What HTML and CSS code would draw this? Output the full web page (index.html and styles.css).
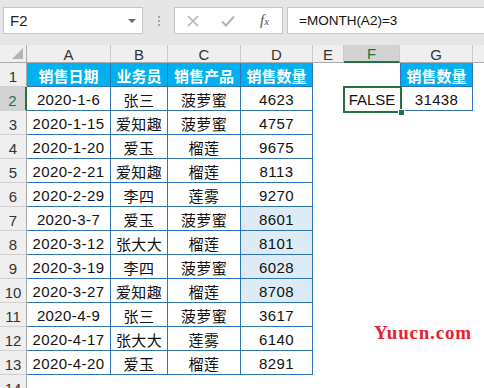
FILE: index.html
```html
<!DOCTYPE html>
<html lang="zh-CN">
<head>
<meta charset="utf-8">
<link rel="stylesheet" href="styles.css">
</head>
<body>
<div class="toolbar">
  <div class="namebox"><span class="name">F2</span><span class="drop"></span></div>
  <div class="dots"><i></i><i></i><i></i></div>
  <div class="btns">
    <span class="slot"><svg width="12" height="12" viewBox="0 0 12 12"><path d="M1 1L11 11M11 1L1 11" stroke="#b3b3b3" stroke-width="1.6" fill="none"/></svg></span>
    <span class="slot"><svg width="14" height="12" viewBox="0 0 14 12"><path d="M1 6.5L5 10.5L13 1.5" stroke="#b3b3b3" stroke-width="2" fill="none"/></svg></span>
    <span class="slot fx">f<sub>x</sub></span>
  </div>
  <div class="formula">=MONTH(A2)=3</div>
</div>
<div class="grid">
  <div class="corner"></div><div class="ch">A</div><div class="ch">B</div><div class="ch">C</div><div class="ch">D</div><div class="ch">E</div><div class="ch sel">F</div><div class="ch">G</div><div class="ch last"></div>

  <div class="rh">1</div><div class="th">销售日期</div><div class="th">业务员</div><div class="th">销售产品</div><div class="th">销售数量</div><div class="c"></div><div class="c"></div><div class="th g">销售数量</div><div class="c"></div>

  <div class="rh sel">2</div><div class="t">2020-1-6</div><div class="t">张三</div><div class="t">菠萝蜜</div><div class="t">4623</div><div class="c"></div><div class="c f2">FALSE<span class="selbox"></span><span class="handle"></span></div><div class="t g">31438</div><div class="c"></div>

  <div class="rh">3</div><div class="t">2020-1-15</div><div class="t">爱知趣</div><div class="t">菠萝蜜</div><div class="t">4757</div><div class="c"></div><div class="c"></div><div class="c"></div><div class="c"></div>

  <div class="rh">4</div><div class="t">2020-1-20</div><div class="t">爱玉</div><div class="t">榴莲</div><div class="t">9675</div><div class="c"></div><div class="c"></div><div class="c"></div><div class="c"></div>

  <div class="rh">5</div><div class="t">2020-2-21</div><div class="t">爱知趣</div><div class="t">榴莲</div><div class="t">8113</div><div class="c"></div><div class="c"></div><div class="c"></div><div class="c"></div>

  <div class="rh">6</div><div class="t">2020-2-29</div><div class="t">李四</div><div class="t">莲雾</div><div class="t">9270</div><div class="c"></div><div class="c"></div><div class="c"></div><div class="c"></div>

  <div class="rh">7</div><div class="t">2020-3-7</div><div class="t">爱玉</div><div class="t">菠萝蜜</div><div class="t hl">8601</div><div class="c"></div><div class="c"></div><div class="c"></div><div class="c"></div>

  <div class="rh">8</div><div class="t">2020-3-12</div><div class="t">张大大</div><div class="t">榴莲</div><div class="t hl">8101</div><div class="c"></div><div class="c"></div><div class="c"></div><div class="c"></div>

  <div class="rh">9</div><div class="t">2020-3-19</div><div class="t">李四</div><div class="t">菠萝蜜</div><div class="t hl">6028</div><div class="c"></div><div class="c"></div><div class="c"></div><div class="c"></div>

  <div class="rh">10</div><div class="t">2020-3-27</div><div class="t">爱知趣</div><div class="t">榴莲</div><div class="t hl">8708</div><div class="c"></div><div class="c"></div><div class="c"></div><div class="c"></div>

  <div class="rh">11</div><div class="t">2020-4-9</div><div class="t">张三</div><div class="t">菠萝蜜</div><div class="t">3617</div><div class="c"></div><div class="c"></div><div class="c"></div><div class="c"></div>

  <div class="rh">12</div><div class="t">2020-4-17</div><div class="t">张大大</div><div class="t">莲雾</div><div class="t">6140</div><div class="c"></div><div class="c"></div><div class="c"></div><div class="c"></div>

  <div class="rh">13</div><div class="t">2020-4-20</div><div class="t">爱玉</div><div class="t">榴莲</div><div class="t">8291</div><div class="c"></div><div class="c"></div><div class="c"></div><div class="c"></div>

  <div class="rh">14</div><div class="c"></div><div class="c"></div><div class="c"></div><div class="c"></div><div class="c"></div><div class="c"></div><div class="c"></div><div class="c"></div>
</div>
<div class="watermark">Yuucn.com</div>
</body>
</html>
```
FILE: styles.css
```css
html, body {
  margin: 0;
  padding: 0;
}
body {
  width: 484px;
  height: 388px;
  overflow: hidden;
  background: #ffffff;
  position: relative;
  font-family: "Liberation Sans", "Noto Sans CJK SC", sans-serif;
}
.toolbar {
  height: 45px;
  box-sizing: border-box;
  background: #e6e6e6;
  display: flex;
  align-items: flex-start;
  padding: 7px 0 0 3px;
}
.namebox {
  width: 140px;
  height: 27px;
  box-sizing: border-box;
  background: #fff;
  border: 1px solid #c6c6c6;
  display: flex;
  align-items: center;
  justify-content: space-between;
  padding: 0 6px 0 6px;
}
.name {
  font-size: 15px;
  color: #222;
}
.drop {
  width: 0;
  height: 0;
  border-left: 4px solid transparent;
  border-right: 4px solid transparent;
  border-top: 4px solid #6a6a6a;
}
.dots {
  width: 31px;
  height: 27px;
  display: flex;
  flex-direction: column;
  align-items: center;
  justify-content: center;
  gap: 2px;
}
.dots i {
  display: block;
  width: 2px;
  height: 2px;
  background: #a6a6a6;
}
.btns {
  width: 109px;
  height: 27px;
  box-sizing: border-box;
  background: #fff;
  border: 1px solid #c6c6c6;
  display: flex;
  align-items: center;
}
.slot {
  width: 36px;
  display: flex;
  justify-content: center;
  align-items: center;
}
.fx {
  font-family: "Liberation Serif", serif;
  font-style: italic;
  font-size: 15px;
  color: #555;
  padding-left: 2px;
}
.fx sub {
  font-size: 11px;
  vertical-align: -1px;
}
.formula {
  flex: 1;
  margin-left: 4px;
  height: 27px;
  box-sizing: border-box;
  background: #fff;
  border: 1px solid #c6c6c6;
  border-right: none;
  font-size: 13.5px;
  line-height: 25px;
  padding-left: 11px;
  color: #111;
}
.grid {
  display: grid;
  grid-template-columns: 27px 84px 57px 73px 72px 31px 56px 73px 1fr;
  grid-template-rows: 18px;
  grid-auto-rows: 24px;
}
.grid > div {
  box-sizing: border-box;
  display: flex;
  align-items: center;
  justify-content: center;
  white-space: nowrap;
}
.corner {
  background: #efefef;
  border-right: 1px solid #ababab;
  border-bottom: 1px solid #ababab;
  position: relative;
}
.corner::after {
  content: "";
  position: absolute;
  right: 3px;
  bottom: 3px;
  width: 0;
  height: 0;
  border-left: 11px solid transparent;
  border-bottom: 11px solid #b4b4b4;
}
.ch {
  background: #efefef;
  border-right: 1px solid #cacaca;
  border-bottom: 1px solid #ababab;
  font-size: 15px;
  color: #333;
  padding-top: 1px;
}
.ch.last {
  border-right: none;
}
.ch.sel {
  background: #d3d3d3;
  border-bottom: 2px solid #217346;
  color: #217346;
}
.rh {
  background: #efefef;
  border-right: 1px solid #ababab;
  border-bottom: 1px solid #d0d0d0;
  font-size: 15px;
  color: #333;
  padding-top: 3px;
}
.rh.sel {
  background: #d3d3d3;
  border-right: 2px solid #217346;
  color: #217346;
}
.c {
  font-size: 15px;
}
.t, .th {
  border-right: 1px solid #2e75b6;
  border-bottom: 1px solid #2e75b6;
  font-size: 15px;
  letter-spacing: 0.4px;
  color: #111;
  padding-top: 1px;
}
.th {
  background: #00b0f0;
  color: #ffffff;
  font-weight: bold;
  letter-spacing: 0;
}
.g {
  border-left: 1px solid #2e75b6;
}
.hl {
  background: #ddebf7;
}
.f2 {
  position: relative;
  color: #111;
  padding-top: 1px;
}
.selbox {
  position: absolute;
  left: -1px;
  top: -1px;
  right: -2px;
  bottom: -2px;
  border: 2px solid #217346;
}
.handle {
  position: absolute;
  right: -5px;
  bottom: -5px;
  width: 5px;
  height: 5px;
  background: #217346;
  border: 1px solid #fff;
}
.watermark {
  position: absolute;
  left: 374px;
  top: 322px;
  font-family: "Liberation Serif", serif;
  font-size: 19px;
  font-weight: bold;
  color: #e8202f;
  letter-spacing: 0.8px;
}
```
